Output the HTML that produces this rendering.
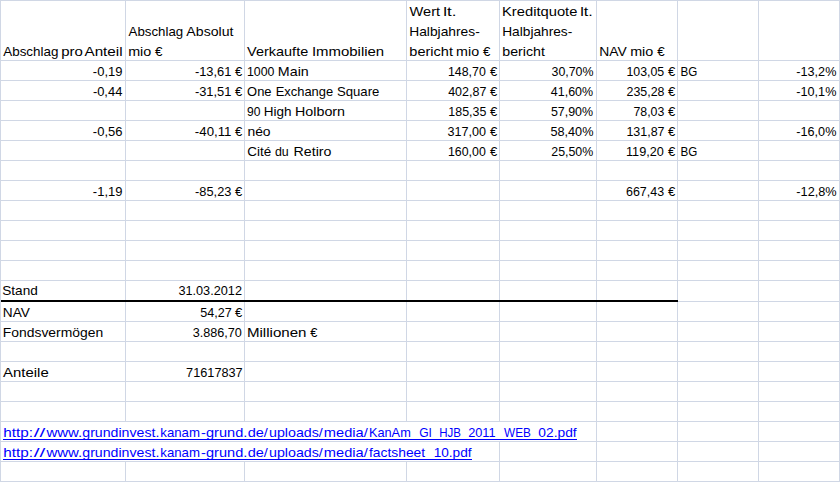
<!DOCTYPE html>
<html lang="de">
<head>
<meta charset="utf-8">
<title>Tabelle</title>
<style>
html,body{margin:0;padding:0;background:#fff;overflow:hidden}
svg{display:block}
text{font-family:"Liberation Sans", sans-serif;font-size:13.3px;fill:#000}
text.l{fill:#0000ff}
</style>
</head>
<body>
<svg width="840" height="482" viewBox="0 0 840 482">
<g shape-rendering="crispEdges">
<g fill="#d0d7e5">
<rect x="0" y="0" width="840" height="1"/>
<rect x="0" y="60" width="840" height="1"/>
<rect x="0" y="80" width="840" height="1"/>
<rect x="0" y="100" width="840" height="1"/>
<rect x="0" y="120" width="840" height="1"/>
<rect x="0" y="140" width="840" height="1"/>
<rect x="0" y="160" width="840" height="1"/>
<rect x="0" y="180" width="840" height="1"/>
<rect x="0" y="200" width="840" height="1"/>
<rect x="0" y="220" width="840" height="1"/>
<rect x="0" y="240" width="840" height="1"/>
<rect x="0" y="260" width="840" height="1"/>
<rect x="0" y="280" width="840" height="1"/>
<rect x="0" y="321" width="840" height="1"/>
<rect x="0" y="341" width="840" height="1"/>
<rect x="0" y="361" width="840" height="1"/>
<rect x="0" y="381" width="840" height="1"/>
<rect x="0" y="401" width="840" height="1"/>
<rect x="0" y="421" width="840" height="1"/>
<rect x="0" y="441" width="840" height="1"/>
<rect x="0" y="461" width="840" height="1"/>
<rect x="0" y="481" width="840" height="1"/>
<rect x="678" y="301" width="162" height="1"/>
<rect x="0" y="0" width="1" height="482"/>
<rect x="125" y="0" width="1" height="482"/>
<rect x="244" y="0" width="1" height="482"/>
<rect x="406" y="0" width="1" height="482"/>
<rect x="499" y="0" width="1" height="482"/>
<rect x="596" y="0" width="1" height="482"/>
<rect x="677" y="0" width="1" height="482"/>
<rect x="758" y="0" width="1" height="482"/>
<rect x="839" y="0" width="1" height="482"/>
</g>
<rect x="1" y="422" width="576" height="19" fill="#fff"/>
<rect x="1" y="442" width="471" height="19" fill="#fff"/>
<rect x="1" y="300" width="677" height="2" fill="#000"/>
<rect x="3" y="439" width="574" height="1" fill="#00f"/>
<rect x="3" y="459" width="469" height="1" fill="#00f"/>
</g>
<g>
<text y="56"><tspan x="3.25" textLength="55.21" lengthAdjust="spacingAndGlyphs">Abschlag</tspan> <tspan x="61.19" textLength="21.64" lengthAdjust="spacingAndGlyphs">pro</tspan> <tspan x="84.46" textLength="38.16" lengthAdjust="spacingAndGlyphs">Anteil</tspan></text>
<text y="36"><tspan x="128.56" textLength="54.61" lengthAdjust="spacingAndGlyphs">Abschlag</tspan> <tspan x="186.39" textLength="47.11" lengthAdjust="spacingAndGlyphs">Absolut</tspan></text>
<text y="56"><tspan x="128.17" textLength="23.1" lengthAdjust="spacingAndGlyphs">mio</tspan> <tspan x="155.08" textLength="7.49" lengthAdjust="spacingAndGlyphs">€</tspan></text>
<text y="56"><tspan x="247.04" textLength="61.18" lengthAdjust="spacingAndGlyphs">Verkaufte</tspan> <tspan x="311.91" textLength="72.27" lengthAdjust="spacingAndGlyphs">Immobilien</tspan></text>
<text y="16"><tspan x="409.63" textLength="30.51" lengthAdjust="spacingAndGlyphs">Wert</tspan> <tspan x="443.16" textLength="13.21" lengthAdjust="spacingAndGlyphs">lt.</tspan></text>
<text x="409.21" y="36" textLength="70.53" lengthAdjust="spacingAndGlyphs">Halbjahres-</text>
<text y="56"><tspan x="409.38" textLength="43.59" lengthAdjust="spacingAndGlyphs">bericht</tspan> <tspan x="456.12" textLength="22.96" lengthAdjust="spacingAndGlyphs">mio</tspan> <tspan x="482.97" textLength="7.39" lengthAdjust="spacingAndGlyphs">€</tspan></text>
<text y="16"><tspan x="502.04" textLength="75.33" lengthAdjust="spacingAndGlyphs">Kreditquote</tspan> <tspan x="580.25" textLength="12.58" lengthAdjust="spacingAndGlyphs">lt.</tspan></text>
<text x="502.24" y="36" textLength="70.04" lengthAdjust="spacingAndGlyphs">Halbjahres-</text>
<text x="502.28" y="56" textLength="42.61" lengthAdjust="spacingAndGlyphs">bericht</text>
<text y="56"><tspan x="599.19" textLength="27.48" lengthAdjust="spacingAndGlyphs">NAV</tspan> <tspan x="630.17" textLength="23.1" lengthAdjust="spacingAndGlyphs">mio</tspan> <tspan x="657.29" textLength="7.48" lengthAdjust="spacingAndGlyphs">€</tspan></text>
<text x="92.86" y="76" textLength="29.56" lengthAdjust="spacingAndGlyphs">-0,19</text>
<text x="92.88" y="96" textLength="29.44" lengthAdjust="spacingAndGlyphs">-0,44</text>
<text x="92.86" y="136" textLength="29.59" lengthAdjust="spacingAndGlyphs">-0,56</text>
<text x="92.86" y="196" textLength="29.56" lengthAdjust="spacingAndGlyphs">-1,19</text>
<text y="76"><tspan x="194.91" textLength="36.56" lengthAdjust="spacingAndGlyphs">-13,61</tspan> <tspan x="234.98" textLength="7.28" lengthAdjust="spacingAndGlyphs">€</tspan></text>
<text y="96"><tspan x="194.91" textLength="36.56" lengthAdjust="spacingAndGlyphs">-31,51</tspan> <tspan x="234.98" textLength="7.28" lengthAdjust="spacingAndGlyphs">€</tspan></text>
<text y="136"><tspan x="194.86" textLength="36.55" lengthAdjust="spacingAndGlyphs">-40,11</tspan> <tspan x="234.98" textLength="7.28" lengthAdjust="spacingAndGlyphs">€</tspan></text>
<text y="196"><tspan x="195.08" textLength="36.35" lengthAdjust="spacingAndGlyphs">-85,23</tspan> <tspan x="234.98" textLength="7.28" lengthAdjust="spacingAndGlyphs">€</tspan></text>
<text y="76"><tspan x="246.99" textLength="27.48" lengthAdjust="spacingAndGlyphs">1000</tspan> <tspan x="277.85" textLength="30.88" lengthAdjust="spacingAndGlyphs">Main</tspan></text>
<text y="96"><tspan x="247.09" textLength="24.47" lengthAdjust="spacingAndGlyphs">One</tspan> <tspan x="275.74" textLength="57.44" lengthAdjust="spacingAndGlyphs">Exchange</tspan> <tspan x="336.94" textLength="42.45" lengthAdjust="spacingAndGlyphs">Square</tspan></text>
<text y="116"><tspan x="247.08" textLength="13.45" lengthAdjust="spacingAndGlyphs">90</tspan> <tspan x="263.74" textLength="27.78" lengthAdjust="spacingAndGlyphs">High</tspan> <tspan x="295.06" textLength="49.98" lengthAdjust="spacingAndGlyphs">Holborn</tspan></text>
<text x="247.41" y="136" textLength="23.19" lengthAdjust="spacingAndGlyphs">néo</text>
<text y="156"><tspan x="247.21" textLength="23.94" lengthAdjust="spacingAndGlyphs">Cité</tspan> <tspan x="274.94" textLength="13.83" lengthAdjust="spacingAndGlyphs">du</tspan> <tspan x="293.56" textLength="37.87" lengthAdjust="spacingAndGlyphs">Retiro</tspan></text>
<text y="76"><tspan x="448.0" textLength="37.79" lengthAdjust="spacingAndGlyphs">148,70</tspan> <tspan x="489.98" textLength="7.28" lengthAdjust="spacingAndGlyphs">€</tspan></text>
<text y="96"><tspan x="448.17" textLength="38.16" lengthAdjust="spacingAndGlyphs">402,87</tspan> <tspan x="489.98" textLength="7.28" lengthAdjust="spacingAndGlyphs">€</tspan></text>
<text y="116"><tspan x="448.36" textLength="37.94" lengthAdjust="spacingAndGlyphs">185,35</tspan> <tspan x="489.98" textLength="7.28" lengthAdjust="spacingAndGlyphs">€</tspan></text>
<text y="136"><tspan x="447.49" textLength="38.47" lengthAdjust="spacingAndGlyphs">317,00</tspan> <tspan x="489.98" textLength="7.28" lengthAdjust="spacingAndGlyphs">€</tspan></text>
<text y="156"><tspan x="448.0" textLength="37.79" lengthAdjust="spacingAndGlyphs">160,00</tspan> <tspan x="489.98" textLength="7.28" lengthAdjust="spacingAndGlyphs">€</tspan></text>
<text x="551.53" y="76" textLength="42.0" lengthAdjust="spacingAndGlyphs">30,70%</text>
<text x="550.79" y="96" textLength="42.34" lengthAdjust="spacingAndGlyphs">41,60%</text>
<text x="550.89" y="116" textLength="42.26" lengthAdjust="spacingAndGlyphs">57,90%</text>
<text x="550.42" y="136" textLength="43.08" lengthAdjust="spacingAndGlyphs">58,40%</text>
<text x="551.26" y="156" textLength="42.03" lengthAdjust="spacingAndGlyphs">25,50%</text>
<text y="76"><tspan x="626.45" textLength="37.78" lengthAdjust="spacingAndGlyphs">103,05</tspan> <tspan x="667.98" textLength="7.28" lengthAdjust="spacingAndGlyphs">€</tspan></text>
<text y="96"><tspan x="626.55" textLength="37.92" lengthAdjust="spacingAndGlyphs">235,28</tspan> <tspan x="667.98" textLength="7.28" lengthAdjust="spacingAndGlyphs">€</tspan></text>
<text y="116"><tspan x="633.46" textLength="30.87" lengthAdjust="spacingAndGlyphs">78,03</tspan> <tspan x="667.98" textLength="7.28" lengthAdjust="spacingAndGlyphs">€</tspan></text>
<text y="136"><tspan x="626.39" textLength="38.14" lengthAdjust="spacingAndGlyphs">131,87</tspan> <tspan x="667.98" textLength="7.28" lengthAdjust="spacingAndGlyphs">€</tspan></text>
<text y="156"><tspan x="626.03" textLength="37.81" lengthAdjust="spacingAndGlyphs">119,20</tspan> <tspan x="667.98" textLength="7.28" lengthAdjust="spacingAndGlyphs">€</tspan></text>
<text y="196"><tspan x="625.97" textLength="38.09" lengthAdjust="spacingAndGlyphs">667,43</tspan> <tspan x="667.98" textLength="7.28" lengthAdjust="spacingAndGlyphs">€</tspan></text>
<text x="680.53" y="76" textLength="16.81" lengthAdjust="spacingAndGlyphs">BG</text>
<text x="680.53" y="156" textLength="16.81" lengthAdjust="spacingAndGlyphs">BG</text>
<text x="796.33" y="76" textLength="40.08" lengthAdjust="spacingAndGlyphs">-13,2%</text>
<text x="796.33" y="96" textLength="40.08" lengthAdjust="spacingAndGlyphs">-10,1%</text>
<text x="796.33" y="136" textLength="40.08" lengthAdjust="spacingAndGlyphs">-16,0%</text>
<text x="796.33" y="196" textLength="40.37" lengthAdjust="spacingAndGlyphs">-12,8%</text>
<text x="2.24" y="295" textLength="35.56" lengthAdjust="spacingAndGlyphs">Stand</text>
<text x="178.39" y="295" textLength="63.58" lengthAdjust="spacingAndGlyphs">31.03.2012</text>
<text x="2.87" y="317" textLength="27.05" lengthAdjust="spacingAndGlyphs">NAV</text>
<text y="317"><tspan x="200.23" textLength="31.52" lengthAdjust="spacingAndGlyphs">54,27</tspan> <tspan x="234.98" textLength="7.28" lengthAdjust="spacingAndGlyphs">€</tspan></text>
<text x="2.83" y="337" textLength="100.35" lengthAdjust="spacingAndGlyphs">Fondsvermögen</text>
<text x="192.63" y="337" textLength="49.26" lengthAdjust="spacingAndGlyphs">3.886,70</text>
<text y="337"><tspan x="246.93" textLength="59.56" lengthAdjust="spacingAndGlyphs">Millionen</tspan> <tspan x="310.31" textLength="7.17" lengthAdjust="spacingAndGlyphs">€</tspan></text>
<text x="3.12" y="377" textLength="45.59" lengthAdjust="spacingAndGlyphs">Anteile</text>
<text x="186.11" y="377" textLength="56.59" lengthAdjust="spacingAndGlyphs">71617837</text>
<text class="l" y="437"><tspan x="3.3" textLength="29.74" lengthAdjust="spacingAndGlyphs">http:</tspan><tspan x="33.66" textLength="11.55" lengthAdjust="spacingAndGlyphs">//</tspan><tspan x="46.45" textLength="35.78" lengthAdjust="spacingAndGlyphs">www.</tspan><tspan x="82.29" textLength="77.06" lengthAdjust="spacingAndGlyphs">grundinvest.</tspan><tspan x="160.29" textLength="39.72" lengthAdjust="spacingAndGlyphs">kanam</tspan><tspan x="201.14" textLength="46.19" lengthAdjust="spacingAndGlyphs">-grund.</tspan><tspan x="247.7" textLength="20.18" lengthAdjust="spacingAndGlyphs">de/</tspan><tspan x="269.05" textLength="53.7" lengthAdjust="spacingAndGlyphs">uploads/</tspan><tspan x="323.87" textLength="43.92" lengthAdjust="spacingAndGlyphs">media/</tspan><tspan x="368.94" textLength="48.9" lengthAdjust="spacingAndGlyphs">KanAm_</tspan><tspan x="419.28" textLength="19.37" lengthAdjust="spacingAndGlyphs">GI_</tspan><tspan x="439.26" textLength="28.11" lengthAdjust="spacingAndGlyphs">HJB_</tspan><tspan x="468.16" textLength="34.52" lengthAdjust="spacingAndGlyphs">2011_</tspan><tspan x="504.04" textLength="33.38" lengthAdjust="spacingAndGlyphs">WEB_</tspan><tspan x="538.36" textLength="38.27" lengthAdjust="spacingAndGlyphs">02.pdf</tspan></text>
<text class="l" y="457"><tspan x="3.3" textLength="29.74" lengthAdjust="spacingAndGlyphs">http:</tspan><tspan x="33.66" textLength="11.55" lengthAdjust="spacingAndGlyphs">//</tspan><tspan x="46.45" textLength="35.78" lengthAdjust="spacingAndGlyphs">www.</tspan><tspan x="82.29" textLength="77.06" lengthAdjust="spacingAndGlyphs">grundinvest.</tspan><tspan x="160.29" textLength="39.72" lengthAdjust="spacingAndGlyphs">kanam</tspan><tspan x="201.14" textLength="46.19" lengthAdjust="spacingAndGlyphs">-grund.</tspan><tspan x="247.7" textLength="20.18" lengthAdjust="spacingAndGlyphs">de/</tspan><tspan x="269.05" textLength="53.7" lengthAdjust="spacingAndGlyphs">uploads/</tspan><tspan x="323.87" textLength="43.92" lengthAdjust="spacingAndGlyphs">media/</tspan><tspan x="369.0" textLength="63.79" lengthAdjust="spacingAndGlyphs">factsheet_</tspan><tspan x="433.67" textLength="37.93" lengthAdjust="spacingAndGlyphs">10.pdf</tspan></text>
</g>
</svg>
</body>
</html>
